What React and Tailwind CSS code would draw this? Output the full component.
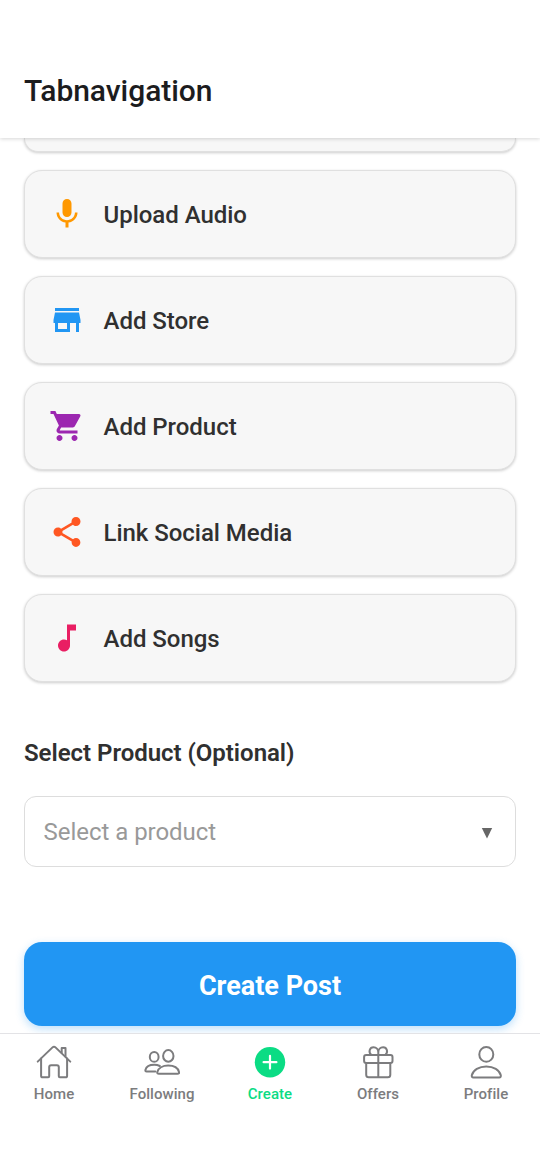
import { MdMic, MdStore, MdShoppingCart, MdShare, MdMusicNote } from 'react-icons/md';

const actions = [
  { label: 'Upload Audio', Icon: MdMic, color: 'text-[#ff9800]' },
  { label: 'Add Store', Icon: MdStore, color: 'text-[#2196f3]' },
  { label: 'Add Product', Icon: MdShoppingCart, color: 'text-[#9c27b0]' },
  { label: 'Link Social Media', Icon: MdShare, color: 'text-[#ff5722]' },
  { label: 'Add Songs', Icon: MdMusicNote, color: 'text-[#e91e63]' },
];

function Line({ children }) {
  return (
    <svg className="h-9 w-9" viewBox="0 0 36 36" fill="none" stroke="currentColor" strokeWidth="2" strokeLinecap="round" strokeLinejoin="round">
      {children}
    </svg>
  );
}

function HomeIcon() {
  return (
    <Line>
      <path d="M1.700 17.600 16.500 3.400Q18 1.900 19.500 3.400L34.300 17.600" />
      <path d="M25.700 8.700V3.900h3.800v8.500" />
      <path d="M5.100 14.600v17.100q0 1.600 1.600 1.600h5.500q1 0 1-1v-9.200q0-1.900 1.900-1.900h5.800q1.900 0 1.900 1.900v9.200q0 1 1 1h5.700q1.600 0 1.600-1.600V14.600" />
    </Line>
  );
}

function FollowingIcon() {
  return (
    <Line>
      <ellipse cx="10.200" cy="12.900" rx="4.400" ry="4.900" />
      <ellipse cx="24.300" cy="11.900" rx="5.200" ry="5.800" />
      <path d="M14.900 29.800h18.600q1.900 0 1.500-1.800c-1-4-5.400-6.400-10.800-6.400s-9.900 2.400-10.900 6.400q-.4 1.800 1.600 1.800Z" />
      <path d="M11.300 27.500H2.600q-1.500 0-1.200-1.600c.8-3.200 4.400-5.100 8.900-5.100q3.100 0 5.500 1.200" />
    </Line>
  );
}

function CreateIcon() {
  return (
    <svg className="h-9 w-9" viewBox="0 0 36 36">
      <circle cx="18" cy="18.200" r="15.200" fill="currentColor" />
      <path d="M18 11.800v12.800M11.600 18.200h12.800" stroke="white" strokeWidth="2.200" strokeLinecap="round" />
    </svg>
  );
}

function OffersIcon() {
  return (
    <Line>
      <rect x="4.100" y="10.900" width="28.400" height="8.200" rx="2" />
      <path d="M6.200 19.100v11.600q0 2.500 2.500 2.500h19.100q2.500 0 2.500-2.500V19.100M18.300 10.900v22.300" />
      <path d="M11.100 10.700C8.200 8 9.600 3.200 13.500 3.200c2.800 0 4.800 2 4.800 5v2.500M25.500 10.700c2.900-2.700 1.500-7.500-2.400-7.500-2.800 0-4.800 2-4.800 5" />
    </Line>
  );
}

function ProfileIcon() {
  return (
    <Line>
      <ellipse cx="18.300" cy="10.400" rx="7" ry="7.400" />
      <path d="M5.400 33.400h25.800q2 0 1.600-2.100c-1.200-5.300-7.300-8.900-14.500-8.900S5 26 3.800 31.300q-.4 2.100 1.600 2.100Z" />
    </Line>
  );
}

const tabs = [
  { label: 'Home', Icon: HomeIcon },
  { label: 'Following', Icon: FollowingIcon },
  { label: 'Create', Icon: CreateIcon, active: true },
  { label: 'Offers', Icon: OffersIcon },
  { label: 'Profile', Icon: ProfileIcon },
];

const cardStyle = 'border-[1.5px] border-[#e0e0e0] bg-[#f7f7f7] shadow-[0_1px_3px_rgba(0,0,0,0.2)]';

export default function App() {
  return (
    <div className="flex h-[1170px] w-[540px] flex-col overflow-hidden bg-white font-['Roboto',sans-serif] text-[#303030]">
      <header className="relative z-10 flex h-[138px] shrink-0 items-end bg-white px-6 pb-7 shadow-[0_1px_4px_rgba(0,0,0,0.16)]">
        <h1 className="text-[30px] leading-[38px] font-medium tracking-[-0.05px] text-[#1c1c1e]">Tabnavigation</h1>
      </header>

      <main className="flex h-[895px] shrink-0 flex-col overflow-hidden px-6">
        <div className={`h-[14px] shrink-0 rounded-b-[18px] border-t-0 ${cardStyle}`} />
        {actions.map(({ label, Icon, color }) => (
          <button key={label} className={`mt-[18px] flex h-[88px] shrink-0 items-center gap-[18.5px] rounded-[18px] px-6 ${cardStyle}`}>
            <Icon className={`size-9 ${color}`} />
            <span className="pt-0.5 text-2xl font-medium tracking-[-0.03px]">{label}</span>
          </button>
        ))}

        <h2 className="mt-[55px] text-2xl leading-8 font-semibold tracking-[-0.03px]">Select Product (Optional)</h2>
        <button className="mt-[27px] flex h-[71px] shrink-0 items-center justify-between rounded-xl border border-[#dddddd] bg-white pr-[22px] pl-[18.5px]">
          <span className="pt-px text-2xl tracking-[-0.03px] text-[#999999]">Select a product</span>
          <svg className="mt-0.5 h-3 w-3" viewBox="0 0 12 12">
            <path d="M.8 1h10.400L6 11.500Z" fill="#666666" />
          </svg>
        </button>

        <button className="mt-[75px] flex h-[84px] shrink-0 items-center justify-center rounded-[18px] bg-[#2196f3] pt-[5px] text-[27px] font-bold text-white shadow-[0_3px_9px_rgba(33,150,243,0.3)]">
          Create Post
        </button>
      </main>

      <nav className="grid h-[137px] grid-cols-5 border-t border-[#e3e3e6] bg-white pt-[10px]">
        {tabs.map(({ label, Icon, active }) => (
          <div key={label} className={`flex flex-col items-center ${active ? 'text-[#0bdc84]' : 'text-[#7c7c7e]'}`}>
            <Icon />
            <span className="mt-[5px] text-[15px] leading-[18px] font-medium tracking-[0.05px]">{label}</span>
          </div>
        ))}
      </nav>
    </div>
  );
}
